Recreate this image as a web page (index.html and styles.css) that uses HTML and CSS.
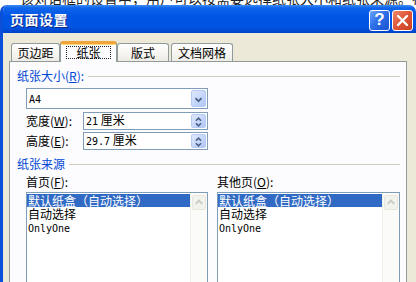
FILE: index.html
```html
<!DOCTYPE html>
<html lang="zh-CN">
<head>
    <meta charset="UTF-8">
    <meta name="viewport" content="width=device-width, initial-scale=1.0">
    <title>页面设置</title>
    <link rel="stylesheet" href="styles.css">
</head>
<body>
    <div class="strip">
        <p>该对话框的设置中，用户可以按需要选择纸张大小和纸张来源。在“页面设置”对话框中单击纸张</p>
    </div>

    <div class="window">
        <div class="titlebar">
            <span class="title">页面设置</span>
            <div class="caption-buttons">
                <span class="cbtn help">?</span>
                <span class="cbtn close">
                    <svg width="13" height="13" viewBox="0 0 13 13">
                        <path d="M2 2 L11 11 M11 2 L2 11" stroke="#fff" stroke-width="2.4" stroke-linecap="round"/>
                    </svg>
                </span>
            </div>
        </div>

        <div class="client">
            <div class="tabs">
                <div class="tab tab-margins">页边距</div>
                <div class="tab tab-paper active"><span class="focus">纸张</span></div>
                <div class="tab tab-layout">版式</div>
                <div class="tab tab-grid">文档网格</div>
            </div>

            <div class="panel">
                <div class="group-head">
                    <span class="group-title">纸张大小(<u>R</u>):</span>
                    <i class="group-line"></i>
                </div>
                <div class="group-body">
                    <div class="combo">
                        <span class="combo-text"><span class="mono">A4</span></span>
                        <span class="xp-btn">
                            <svg width="15" height="17" viewBox="0 0 15 17">
                                <path d="M4 7 L7.5 10.5 L11 7" fill="none" stroke="#4d6185" stroke-width="2"/>
                            </svg>
                        </span>
                    </div>
                    <div class="field-row">
                        <label class="field-label">宽度(<u>W</u>):</label>
                        <div class="spin">
                            <span class="spin-text"><span class="mono">21</span> 厘米</span>
                            <span class="xp-btn spin-btn">
                                <svg width="15" height="14" viewBox="0 0 15 14">
                                    <path d="M4.5 5.5 L7.5 2.5 L10.5 5.5 M4.5 8.5 L7.5 11.5 L10.5 8.5" fill="none" stroke="#4d6185" stroke-width="1.8"/>
                                </svg>
                            </span>
                        </div>
                    </div>
                    <div class="field-row">
                        <label class="field-label">高度(<u>E</u>):</label>
                        <div class="spin">
                            <span class="spin-text"><span class="mono">29.7</span> 厘米</span>
                            <span class="xp-btn spin-btn">
                                <svg width="15" height="14" viewBox="0 0 15 14">
                                    <path d="M4.5 5.5 L7.5 2.5 L10.5 5.5 M4.5 8.5 L7.5 11.5 L10.5 8.5" fill="none" stroke="#4d6185" stroke-width="1.8"/>
                                </svg>
                            </span>
                        </div>
                    </div>
                </div>

                <div class="group-head source-head">
                    <span class="group-title">纸张来源</span>
                    <i class="group-line"></i>
                </div>
                <div class="sources">
                    <div class="source first-page">
                        <label class="field-label">首页(<u>F</u>):</label>
                        <div class="listbox">
                            <ul class="items">
                                <li class="selected">默认纸盒（自动选择）</li>
                                <li>自动选择</li>
                                <li><span class="mono">OnlyOne</span></li>
                            </ul>
                            <div class="scrollbar">
                                <span class="scroll-up">
                                    <svg width="13" height="13" viewBox="0 0 13 13">
                                        <path d="M3 8 L6.5 4.5 L10 8" fill="none" stroke="#c9c9c0" stroke-width="2"/>
                                    </svg>
                                </span>
                            </div>
                        </div>
                    </div>
                    <div class="source other-pages">
                        <label class="field-label">其他页(<u>O</u>):</label>
                        <div class="listbox">
                            <ul class="items">
                                <li class="selected">默认纸盒（自动选择）</li>
                                <li>自动选择</li>
                                <li><span class="mono">OnlyOne</span></li>
                            </ul>
                            <div class="scrollbar">
                                <span class="scroll-up">
                                    <svg width="13" height="13" viewBox="0 0 13 13">
                                        <path d="M3 8 L6.5 4.5 L10 8" fill="none" stroke="#c9c9c0" stroke-width="2"/>
                                    </svg>
                                </span>
                            </div>
                        </div>
                    </div>
                </div>
            </div>
        </div>
    </div>
</body>
</html>
```

FILE: styles.css
```css
* {
    margin: 0;
    padding: 0;
    box-sizing: border-box;
}

body {
    width: 416px;
    height: 282px;
    overflow: hidden;
    background-color: #fff;
    font-family: "Noto Sans CJK SC", sans-serif;
    font-size: 12px;
    color: #000;
}

u {
    text-decoration: underline;
    text-underline-offset: 1px;
}

.mono {
    font-family: "DejaVu Sans Mono", "Liberation Mono", monospace;
    font-size: 10px;
}

/* cut-off text line above the dialog */
.strip {
    height: 5px;
    overflow: hidden;
    padding-left: 20px;
}

.strip p {
    font-size: 14px;
    line-height: 14px;
    margin-top: -9px;
    white-space: nowrap;
    color: #222;
}

.window {
    background-color: #ece9d8;
    border-left: 3px solid #0a4fd8;
    border-top-left-radius: 7px;
    border-top-right-radius: 7px;
    overflow: hidden;
    height: 277px;
}

.titlebar {
    height: 28px;
    margin-left: -3px;
    display: flex;
    align-items: center;
    justify-content: space-between;
    padding: 0 3px 0 10px;
    background: linear-gradient(#3d8cf7 0%, #1065ec 10%, #0055e5 40%, #0053e0 80%, #0043c8 100%);
}

.title {
    color: #fff;
    font-size: 14px;
    font-weight: bold;
    letter-spacing: 0.5px;
    text-shadow: 1px 1px 0 #0a2a8a;
}

.caption-buttons {
    display: flex;
    gap: 2px;
    margin-top: 2px;
}

.cbtn {
    width: 21px;
    height: 21px;
    border: 1px solid #fff;
    border-radius: 3px;
    display: flex;
    align-items: center;
    justify-content: center;
    color: #fff;
}

.help {
    background: linear-gradient(135deg, #6aa3fb 0%, #2e6fe8 45%, #1a52d0 100%);
    font-family: "Liberation Sans", sans-serif;
    font-size: 17px;
    font-weight: bold;
}

.close {
    background: linear-gradient(135deg, #f08a6c 0%, #e0583a 45%, #c8401f 100%);
}

.client {
    padding: 8px 9px 0 6px;
}

.tabs {
    display: flex;
    align-items: flex-end;
    padding-left: 2px;
    height: 20px;
    position: relative;
    z-index: 1;
}

.tab {
    height: 18px;
    line-height: 17px;
    text-align: center;
    border: 1px solid #919b9c;
    border-bottom: none;
    border-radius: 3px 3px 0 0;
    background: linear-gradient(#fefefe 0%, #f7f6f2 50%, #ecebe4 100%);
}

.tab-margins { width: 49px; }
.tab-layout { width: 52px; }
.tab-grid { width: 62px; margin-left: 2px; }

.tab.active {
    width: 57px;
    height: 21px;
    margin-bottom: -1px;
    background: #fcfcfe;
    border-top: 3px solid #f0a43a;
    box-shadow: inset 0 1px 0 #ffd877;
    padding-top: 2px;
    line-height: 12px;
}

.focus {
    display: inline-block;
    width: 45px;
    height: 13px;
    border: 1px dotted #222;
}

.panel {
    height: 230px;
    background: #fcfcfe;
    border: 1px solid #919b9c;
    border-bottom: none;
    padding: 7px 6px 0 7px;
}

.group-head {
    display: flex;
    align-items: center;
    height: 14px;
    line-height: 14px;
}

.group-title {
    color: #0046d5;
    white-space: nowrap;
}

.group-line {
    flex: 1;
    height: 1px;
    margin-left: 4px;
    margin-top: 1px;
    background-color: #d0d0bf;
}

.group-body {
    padding-left: 9px;
    padding-top: 5px;
}

.combo, .spin {
    display: flex;
    align-items: center;
    justify-content: space-between;
    background: #fff;
    border: 1px solid #7f9db9;
    padding: 0 1px 0 2px;
}

.combo {
    width: 182px;
    height: 21px;
}

.xp-btn {
    display: flex;
    width: 15px;
    height: 17px;
    border: 1px solid #b7caf5;
    border-radius: 2px;
    background: linear-gradient(135deg, #e0e9fd 0%, #c4d6fb 55%, #b0c7f6 100%);
}

.field-row {
    display: flex;
    align-items: center;
    margin-top: 3px;
}

.field-row + .field-row {
    margin-top: 2px;
}

.field-label {
    width: 57px;
    line-height: 14px;
}

.spin {
    width: 125px;
    height: 18px;
}

.spin-btn {
    height: 14px;
}

.spin-text, .combo-text {
    line-height: 14px;
}

.source-head {
    margin-top: 7px;
}

.sources {
    display: flex;
    gap: 9px;
    padding-left: 9px;
    margin-top: 4px;
}

.source .field-label {
    display: block;
    width: auto;
    height: 14px;
    margin-bottom: 3px;
}

.first-page { width: 182px; }
.other-pages { width: 183px; }

.listbox {
    display: flex;
    height: 100px;
    background: #fff;
    border: 1px solid #7f9db9;
    border-bottom: none;
}

.items {
    list-style: none;
    flex: 1;
    padding-top: 1px;
}

.items li {
    height: 13px;
    line-height: 13px;
    padding-left: 1px;
    white-space: nowrap;
}

.items li.selected {
    background-color: #316ac5;
    color: #fff;
}

.scrollbar {
    width: 17px;
    background: #fbfbf9;
    border-left: 1px solid #f0f0ea;
    padding: 2px 1px 0 1px;
}

.scroll-up {
    display: flex;
    align-items: center;
    justify-content: center;
    height: 15px;
    border: 1px solid #e6e6dc;
    border-radius: 2px;
    background: #f3f3ee;
}
```
